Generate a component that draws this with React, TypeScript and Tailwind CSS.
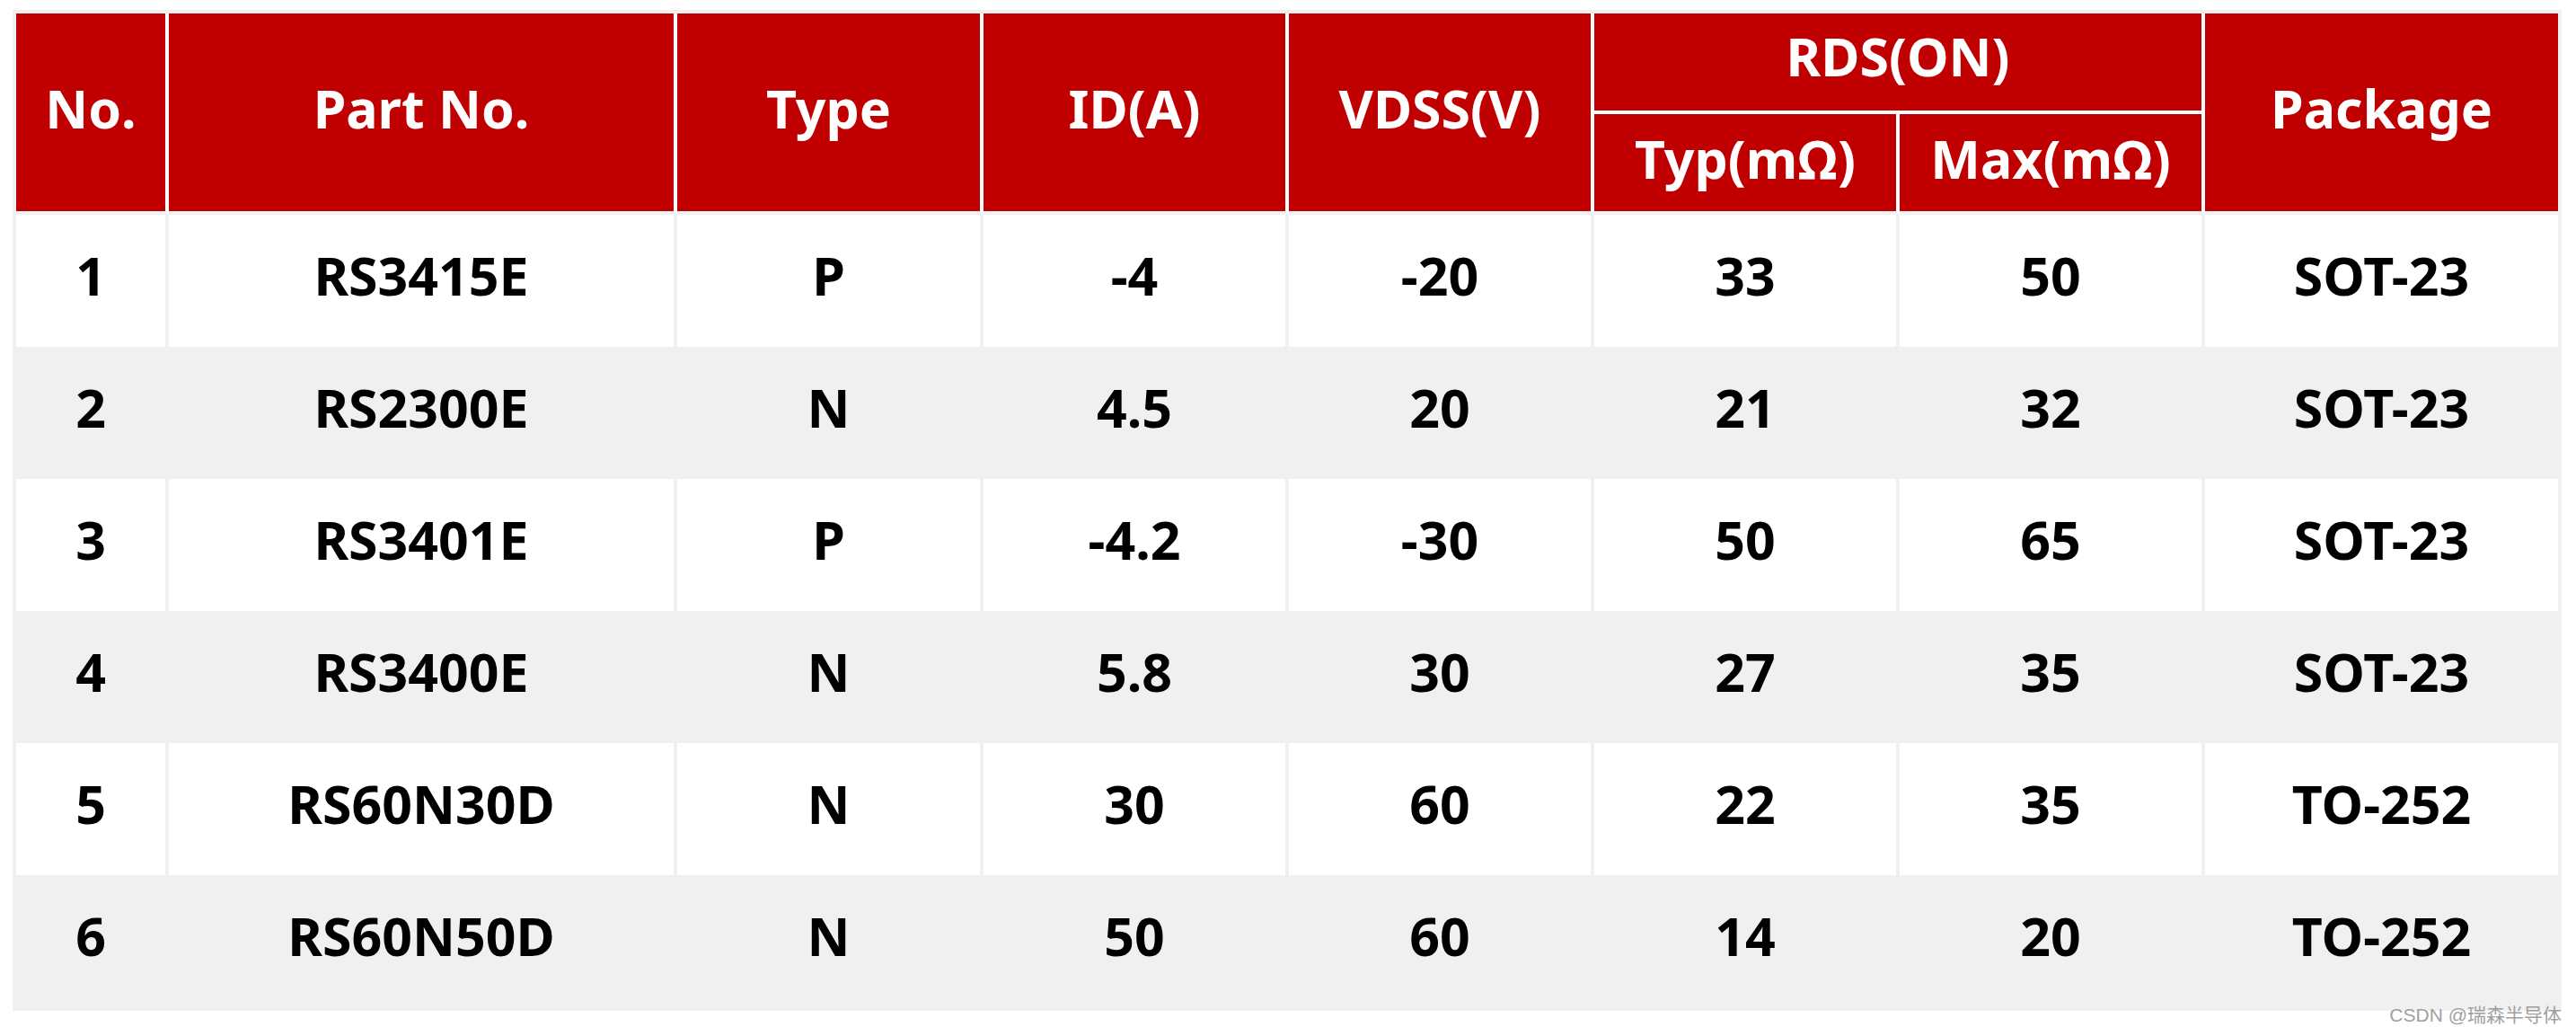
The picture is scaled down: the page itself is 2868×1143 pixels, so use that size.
import React from "react";

const rows = [
  ["1", "RS3415E", "P", "-4", "-20", "33", "50", "SOT-23"],
  ["2", "RS2300E", "N", "4.5", "20", "21", "32", "SOT-23"],
  ["3", "RS3401E", "P", "-4.2", "-30", "50", "65", "SOT-23"],
  ["4", "RS3400E", "N", "5.8", "30", "27", "35", "SOT-23"],
  ["5", "RS60N30D", "N", "30", "60", "22", "35", "TO-252"],
  ["6", "RS60N50D", "N", "50", "60", "14", "20", "TO-252"],
];

const font = { fontFamily: '"Noto Sans", "Open Sans", sans-serif' };

export default function App() {
  return (
    <div className="relative w-[2868px] h-[1143px] bg-white overflow-hidden" style={font}>
      <div className="pl-[14px] pt-[11px]">
        <table className="table-fixed w-[2838px] border-separate border-spacing-0 border-4 border-[#f0f0f0] text-[59px] font-bold leading-none text-center">
          <colgroup>
            <col className="w-[170px]" />
            <col className="w-[566px]" />
            <col className="w-[341px]" />
            <col className="w-[340px]" />
            <col className="w-[340px]" />
            <col className="w-[340px]" />
            <col className="w-[340px]" />
            <col className="w-[393px]" />
          </colgroup>
          <thead className="text-white">
            <tr className="h-[112px]">
              <HeadCell rowSpan={2}>No.</HeadCell>
              <HeadCell rowSpan={2}>Part No.</HeadCell>
              <HeadCell rowSpan={2}>Type</HeadCell>
              <HeadCell rowSpan={2}>ID(A)</HeadCell>
              <HeadCell rowSpan={2}>VDSS(V)</HeadCell>
              <th colSpan={2} className="bg-[#c00000] border-r-4 border-b-4 border-r-white border-b-white align-middle pb-[14px]">
                RDS(ON)
              </th>
              <HeadCell rowSpan={2} last>Package</HeadCell>
            </tr>
            <tr className="h-[112px]">
              <HeadCell>Typ(mΩ)</HeadCell>
              <HeadCell>Max(mΩ)</HeadCell>
            </tr>
          </thead>
          <tbody className="text-black">
            {rows.map((r, i) => (
              <tr key={i} className={i % 2 === 0 ? "h-[147px] bg-white" : "h-[147px] bg-[#f0f0f0]"}>
                {r.map((c, j) => (
                  <td
                    key={j}
                    className={j < r.length - 1 ? "border-r-4 border-[#f0f0f0] align-middle pb-[12px]" : "align-middle pb-[12px]"}
                  >
                    {c}
                  </td>
                ))}
              </tr>
            ))}
          </tbody>
        </table>
      </div>
      <div
        className="absolute right-[16px] bottom-[3px] text-[21px] leading-none text-[#a0a0a0]"
        style={{ fontFamily: '"Liberation Sans", "Noto Sans CJK SC", sans-serif' }}
      >
        CSDN @瑞森半导体
      </div>
    </div>
  );
}

function HeadCell({
  children,
  rowSpan,
  last,
}: {
  children: React.ReactNode;
  rowSpan?: number;
  last?: boolean;
}) {
  return (
    <th
      rowSpan={rowSpan}
      className={
        last
          ? "bg-[#c00000] border-b-4 border-[#f4f4f4] align-middle pb-[10px]"
          : "bg-[#c00000] border-r-4 border-b-4 border-r-white border-b-[#f4f4f4] align-middle pb-[10px]"
      }
    >
      {children}
    </th>
  );
}
